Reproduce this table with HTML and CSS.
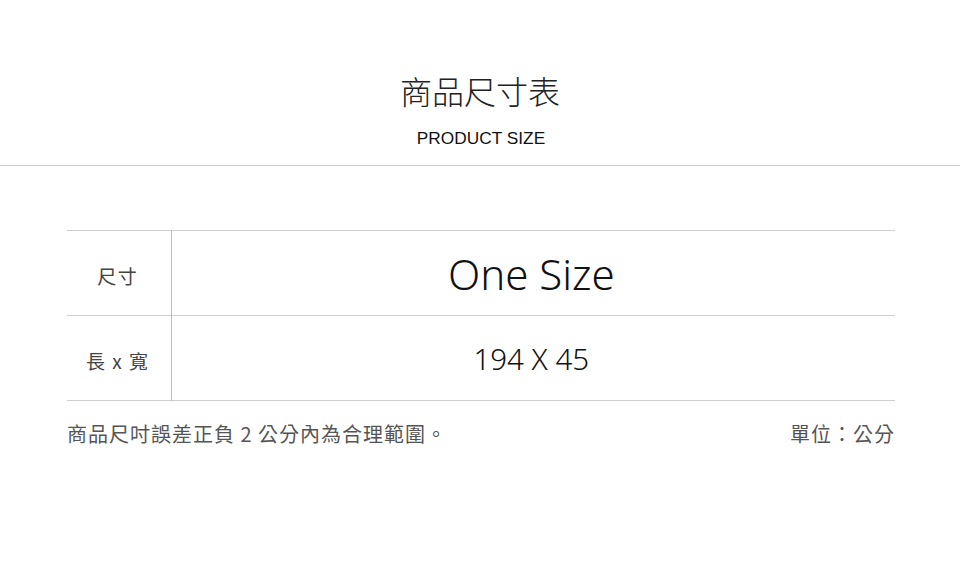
FILE: index.html
```html
<!DOCTYPE html>
<html lang="zh-Hant">
<head>
<meta charset="utf-8">
<link rel="stylesheet" href="styles.css">
</head>
<body>
<header class="head">
  <h1 class="title">商品尺寸表</h1>
  <p class="subtitle">PRODUCT SIZE</p>
</header>
<main class="content">
  <table class="size-table">
    <tr>
      <th>尺寸</th>
      <td class="big">One Size</td>
    </tr>
    <tr>
      <th>長 x 寬</th>
      <td class="mid">194 X 45</td>
    </tr>
  </table>
  <div class="notes">
    <span>商品尺吋誤差正負 2 公分內為合理範圍。</span>
    <span>單位：公分</span>
  </div>
</main>
</body>
</html>
```
FILE: styles.css
```css
* { box-sizing: border-box; }
html, body { margin: 0; padding: 0; background: #fff; }
body { font-family: "Liberation Sans", "Noto Sans CJK TC", sans-serif; }
.head {
  text-align: center;
  border-bottom: 1px solid #cfcfcf;
  padding-top: 68px;
  height: 166px;
}
.title {
  margin: 0;
  font-family: "Noto Sans CJK TC", sans-serif;
  font-weight: 300;
  font-size: 32px;
  line-height: 44px;
  color: #222;
}
.subtitle {
  margin: 16px 0 0;
  font-family: "Liberation Sans", sans-serif;
  font-size: 17.3px;
  line-height: 20px;
  color: #111;
  padding-left: 2px;
}
.content {
  margin: 64px 65px 0 67px;
}
.size-table {
  width: 100%;
  border-collapse: collapse;
}
.size-table tr {
  border-top: 1px solid #cfcfcf;
  border-bottom: 1px solid #cfcfcf;
  height: 85px;
}
.size-table th {
  width: 104px;
  border-right: 1px solid #bdbdbd;
  font-family: "Noto Sans CJK TC", sans-serif;
  font-weight: 400;
  font-size: 19px;
  letter-spacing: 1.5px;
  color: #444;
  padding: 5px 2px 0 0;
}
.size-table td {
  text-align: center;
  padding: 0 4px 0 0;
  color: #111;
  font-family: "Noto Sans", "Open Sans", sans-serif;
}
.big { font-size: 42px; font-weight: 300; }
.mid { font-size: 29.5px; font-weight: 300; }
.notes {
  display: flex;
  justify-content: space-between;
  padding-top: 18px;
  font-family: "Noto Sans CJK TC", sans-serif;
  font-size: 20px;
  letter-spacing: 1px;
  line-height: 30px;
  color: #555;
}
```
